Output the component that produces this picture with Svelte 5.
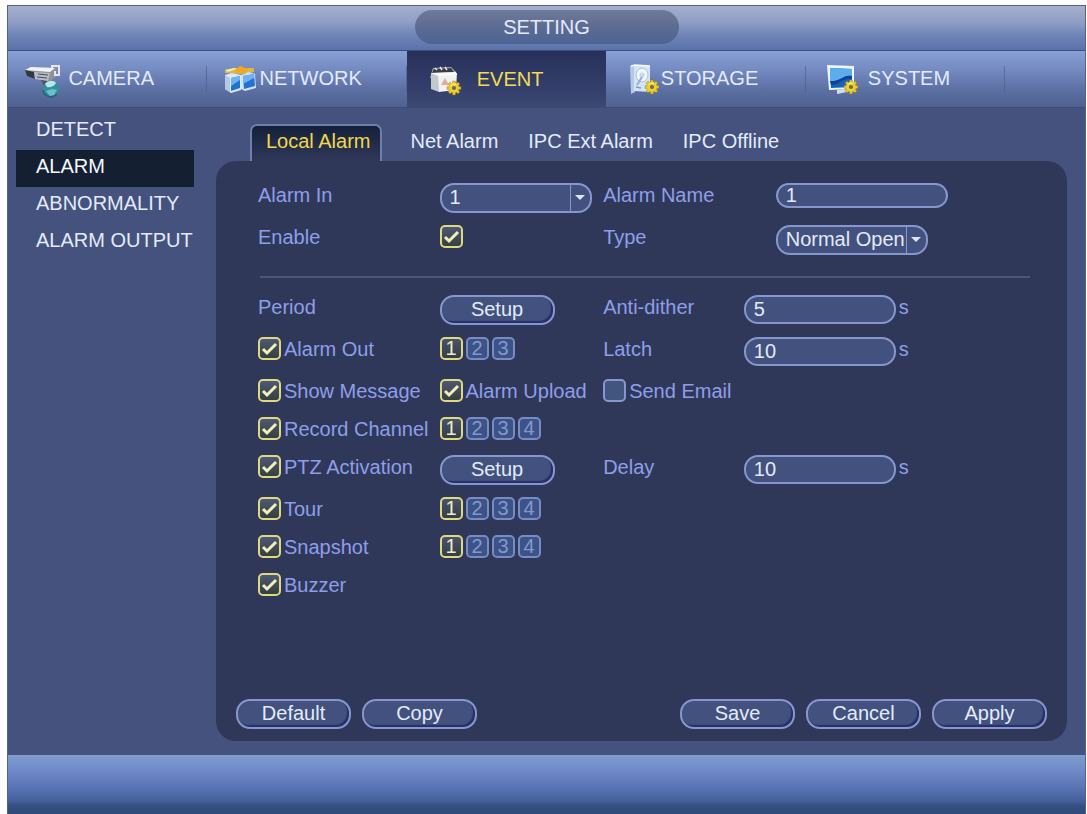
<script>
  const sections = ['CAMERA', 'NETWORK', 'EVENT', 'STORAGE', 'SYSTEM'];
  const menu = ['DETECT', 'ALARM', 'ABNORMALITY', 'ALARM OUTPUT'];
  const tabs = ['Local Alarm', 'Net Alarm', 'IPC Ext Alarm', 'IPC Offline'];

  let section = $state('EVENT');
  let page = $state('ALARM');
  let tab = $state('Local Alarm');

  let alarmIn = $state('1');
  let alarmName = $state('1');
  let type = $state('Normal Open');
  let antiDither = $state('5');
  let latch = $state('10');
  let delay = $state('10');

  let on = $state({
    enable: true,
    out: true,
    message: true,
    upload: true,
    email: false,
    record: true,
    ptz: true,
    tour: true,
    snapshot: true,
    buzzer: true
  });

  let picked = $state({
    out: [true, false, false],
    record: [true, false, false, false],
    tour: [true, false, false, false],
    snapshot: [true, false, false, false]
  });
</script>

{#snippet tick(key, id)}
  <span class="tick">
    <input type="checkbox" {id} bind:checked={on[key]} />
    <svg viewBox="0 0 23 23" aria-hidden="true"><path d="M5 12 9 16 18 7" /></svg>
  </span>
{/snippet}

{#snippet check(key, text)}
  <label class="check">
    {@render tick(key)}
    <span>{text}</span>
  </label>
{/snippet}

{#snippet chips(key)}
  <div class="chips">
    {#each picked[key] as chosen, i}
      <button
        type="button"
        class="chip"
        class:chosen
        aria-pressed={chosen}
        onclick={() => (picked[key][i] = !chosen)}>{i + 1}</button>
    {/each}
  </div>
{/snippet}

{#snippet arrow()}
  <svg viewBox="0 0 20 26" aria-hidden="true"><path d="M.5 0v26" /><path class="arrow" d="M5 10h10l-5 5z" /></svg>
{/snippet}

{#snippet gear(x, y)}
  <g transform="translate({x} {y})">
    <g fill="#e3c322" stroke="#8a7420" stroke-width=".4">
      {#each [0, 45, 90, 135] as a}
        <rect x="-1.5" y="-7" width="3" height="14" rx=".6" transform="rotate({a})" />
      {/each}
    </g>
    <circle r="4.9" fill="#ecd02e" />
    <circle r="2.1" fill="#6c6a58" />
    <path d="M-3.6-2A4.2 4.2 0 0 1 1.8-3.7" fill="none" stroke="#fff59a" />
  </g>
{/snippet}

{#snippet icon(name)}
  <svg class="icon" viewBox="0 0 46 40" aria-hidden="true">
    {#if name === 'CAMERA'}
      <path d="M0 7 6 4l26 1-1 9-8 5L2 13z" fill="#8d929d" />
      <path d="M0 7 6 4l24 1-5 4z" fill="#f1f3f6" />
      <path d="m0 7 9 2 1 7-8-3z" fill="#343845" />
      <path d="m9 9 16 1-2 8-13-2z" fill="#b7bbc4" />
      <path d="m13 11 10 1M12 14l10 1" stroke="#4b505e" />
      <path d="M27 5V3h7v9h-4V8" fill="none" stroke="#e4e7ee" stroke-width="2" />
      <path d="m16 17 6 1 2 5h-5z" fill="#4f5564" />
      <circle cx="26" cy="26" r="8" fill="#368d9c" />
      <path d="M20 21c3-4 9-4 11-1-2 4-7 5-9 4z" fill="#b5e6e8" />
      <path d="m21 28 6-2 5 1-3 5-4 1z" fill="#6cc0c9" />
      <path d="M18 27a8 8 0 0 0 14 4" fill="none" stroke="#1f6373" stroke-width="1.5" />
    {:else if name === 'NETWORK'}
      <path d="m1 7 9-2h20v4l-13 2L1 10z" fill="#dcb840" />
      <path d="m1 7 9-2 3 1-9 3z" fill="#f2e7b0" />
      <path d="m16 3 8 3-1 3-6 1-7-2z" fill="#f3a71c" />
      <path d="M1 12 8 10l9 2v15l-10 3-6-4z" fill="#dce8f7" />
      <path d="m17 12 8-3 6 2 1 14-11 3-4-2z" fill="#d1e1f4" />
      <path d="m1 12 5 3v14l-5-3z" fill="#b2c9e6" />
      <path d="m7 15 9-2v12l-9 3zM19 13l11-2 1 12-11 3z" fill="#2273d0" />
      <path d="m7 15 9-2v4l-9 6zM19 13l11-2v4l-11 6z" fill="#6fb2ef" />
    {:else if name === 'EVENT'}
      <path d="m9 4 18-1 5 5v8L6 14z" fill="#a9abb0" />
      <path d="m10 5 17-1 3 4-22 1z" fill="#3a3c45" />
      <path d="m11 4 2 2M16 3l2 3M21 3l2 3" stroke="#e4e5e8" stroke-width="1.5" />
      <path d="m7 9 8 1v18l-8-3z" fill="#c3c7d0" />
      <path d="m14 10 19-1-1 17-17 2z" fill="#f0f1f4" />
      <path d="m7 9 25-1 1 3-19 1z" fill="#fafafa" />
      <path d="m17 21 4-7 4 7z" fill="#ddad98" />
      {@render gear(30, 24)}
    {:else if name === 'STORAGE'}
      <path d="m7 3 5-1v27l-4 2z" fill="#b4c9e5" />
      <path d="m11 2 16 1v26l-16-1z" fill="#d5e4f5" />
      <path d="M8 3 12 2l15 1" fill="none" stroke="#f5f9fd" stroke-width="1.5" />
      <ellipse cx="19" cy="12" rx="6" ry="7" fill="#eef5fb" stroke="#a9c1db" />
      <circle cx="19" cy="12" r="2.5" fill="#c6d9ec" />
      <path d="m19 14-5 8" stroke="#94afcf" stroke-width="2" />
      <path d="m13 24 5 1" stroke="#809bbd" stroke-width="1.5" />
      {@render gear(29, 24)}
    {:else}
      <path d="m4 2 27 1v23l-25 1z" fill="#edf4fa" />
      <path d="m7 5 22 1v18L8 25z" fill="#1764b6" />
      <path d="m7 5 22 1v7c-8-2-12 6-22 5z" fill="#5badeb" />
      <path d="M7 18c10 1 14-7 22-5v3C20 14 17 22 8 22z" fill="#0c429a" />
      <path d="m14 27 8-1 2 3-10 2z" fill="#d2dde9" />
      {@render gear(28, 24)}
    {/if}
  </svg>
{/snippet}

<div class="window">
  <header class="title"><h1>SETTING</h1></header>

  <nav class="sections" aria-label="Sections">
    {#each sections as name}
      <button type="button" class="section" class:active={section === name} onclick={() => (section = name)}>
        {@render icon(name)}
        <span>{name}</span>
      </button>
    {/each}
  </nav>

  <div class="body">
    <nav class="menu" aria-label="Event">
      {#each menu as name}
        <button type="button" class:active={page === name} onclick={() => (page = name)}>{name}</button>
      {/each}
    </nav>

    <main>
      <div class="tabs" role="tablist">
        {#each tabs as name}
          <button type="button" role="tab" aria-selected={tab === name} class:active={tab === name} onclick={() => (tab = name)}>{name}</button>
        {/each}
      </div>

      <form class="panel" onsubmit={(e) => e.preventDefault()}>
        <div class="fields upper">
          <div class="row tall">
            <label for="alarm-in">Alarm In</label>
            <div class="select">
              <select id="alarm-in" bind:value={alarmIn}>
                <option>1</option><option>2</option><option>3</option><option>4</option>
              </select>
              {@render arrow()}
            </div>
            <label for="alarm-name">Alarm Name</label>
            <input id="alarm-name" class="text name" type="text" bind:value={alarmName} />
          </div>
          <div class="row tall">
            <label for="enable">Enable</label>
            {@render tick('enable', 'enable')}
            <label for="type">Type</label>
            <div class="select">
              <select id="type" bind:value={type}>
                <option>Normal Open</option><option>Normal Close</option>
              </select>
              {@render arrow()}
            </div>
          </div>
        </div>

        <hr />

        <div class="fields">
          <div class="row tall">
            <span>Period</span>
            <button type="button" class="pill">Setup</button>
            <label for="dither">Anti-dither</label>
            <div class="unit"><input id="dither" class="text" type="text" bind:value={antiDither} /><span>s</span></div>
          </div>
          <div class="row tall">
            {@render check('out', 'Alarm Out')}
            {@render chips('out')}
            <label for="latch">Latch</label>
            <div class="unit"><input id="latch" class="text" type="text" bind:value={latch} /><span>s</span></div>
          </div>
          <div class="row">
            {@render check('message', 'Show Message')}
            {@render check('upload', 'Alarm Upload')}
            {@render check('email', 'Send Email')}
          </div>
          <div class="row">
            {@render check('record', 'Record Channel')}
            {@render chips('record')}
          </div>
          <div class="row tall">
            {@render check('ptz', 'PTZ Activation')}
            <button type="button" class="pill">Setup</button>
            <label for="delay">Delay</label>
            <div class="unit"><input id="delay" class="text" type="text" bind:value={delay} /><span>s</span></div>
          </div>
          <div class="row">
            {@render check('tour', 'Tour')}
            {@render chips('tour')}
          </div>
          <div class="row">
            {@render check('snapshot', 'Snapshot')}
            {@render chips('snapshot')}
          </div>
          <div class="row">
            {@render check('buzzer', 'Buzzer')}
          </div>
        </div>

        <div class="actions">
          <button type="button" class="pill">Default</button>
          <button type="button" class="pill">Copy</button>
          <span class="spacer"></span>
          <button type="submit" class="pill">Save</button>
          <button type="button" class="pill">Cancel</button>
          <button type="button" class="pill">Apply</button>
        </div>
      </form>
    </main>
  </div>

  <footer></footer>
</div>

<style>
  :global(body) {
    background: #fdfdfe;
  }

  .window,
  .window * {
    box-sizing: border-box;
  }

  .window {
    display: flex;
    flex-direction: column;
    min-height: calc(100vh - 5px);
    margin: 5px 1px 0 7px;
    border: 1px solid #51618c;
    border-bottom: 0;
    background: #44527d;
    color: #e3eafb;
    font: 20px/24px "Liberation Sans", Arial, sans-serif;
  }

  button,
  input,
  select {
    margin: 0;
    padding: 0;
    border: 0;
    background: none;
    color: inherit;
    font: inherit;
  }

  .title {
    display: flex;
    justify-content: center;
    align-items: center;
    height: 44px;
    padding-bottom: 3px;
    background: linear-gradient(#a4afcc, #929fc5 35%, #7085b8 65%, #5b72aa);
  }

  h1 {
    width: 264px;
    margin: 0;
    border-radius: 17px;
    background: linear-gradient(#707a9a, #5c6b92 50%, #4c6494);
    font-size: 20px;
    font-weight: 400;
    line-height: 34px;
    text-align: center;
  }

  .sections {
    display: grid;
    grid-template-columns: repeat(5, minmax(0, 200fr)) 80fr;
    height: 58px;
    border-top: 1px solid #3e4e80;
    border-bottom: 1px solid #3c4b77;
    background: linear-gradient(#87a0d5, #7389bf 35%, #5c70a3 68%, #4e618f);
  }

  .section {
    display: grid;
    align-items: center;
    background: linear-gradient(#5a6ea2, #50638f) right / 1px 26px no-repeat;
  }

  .section > * {
    grid-area: 1 / 1;
  }

  .section span {
    padding: 0 0 2px 7px;
  }

  .section.active {
    margin-bottom: -1px;
    background: linear-gradient(#28305a, #303b67 50%, #3c4973);
    color: #f2dc51;
  }

  .icon {
    width: 46px;
    height: 40px;
    margin: 8px 0 0 17px;
  }

  .body {
    display: flex;
    flex: 1;
    padding-right: 18px;
  }

  .menu {
    display: flex;
    flex-direction: column;
    flex: none;
    width: 208px;
    padding: 5px 22px 0 8px;
  }

  .menu button {
    height: 37px;
    padding: 0 0 5px 20px;
    text-align: left;
    white-space: nowrap;
  }

  .menu button.active {
    background: #142032;
    color: #f4f8ff;
  }

  main {
    display: flex;
    flex: 1;
    flex-direction: column;
    min-width: 0;
    padding: 16px 0 14px;
  }

  .tabs {
    display: flex;
    height: 37px;
    padding-left: 34px;
  }

  .tabs button {
    padding: 0 15px 3px;
    white-space: nowrap;
  }

  .tabs .active {
    margin-right: 14px;
    padding: 0 9px 5px 14px;
    border: 2px solid #6c7fad;
    border-bottom: 0;
    border-radius: 7px 7px 0 0;
    background: linear-gradient(#14203a, #303859);
    color: #f0d848;
  }

  .panel {
    display: flex;
    flex: 1;
    flex-direction: column;
    padding: 22px 20px 12px;
    border-radius: 20px;
    background: #303859;
  }

  .fields {
    display: grid;
    gap: 12px;
    padding-left: 22px;
    color: #8e9eea;
  }

  .row {
    display: grid;
    grid-template-columns: 182fr 164fr 141fr 304fr;
    align-items: start;
    min-height: 26px;
  }

  .upper .row {
    grid-template-columns: 182fr 164fr 173fr 272fr;
  }

  .tall {
    min-height: 30px;
  }

  hr {
    width: calc(100% - 41px);
    height: 2px;
    margin: 21px 0 17px 24px;
    border: 0;
    background: #4b5578;
  }

  .check {
    display: flex;
    gap: 3px;
    white-space: nowrap;
  }

  .tick {
    display: grid;
    width: 23px;
    height: 23px;
  }

  .tick > * {
    grid-area: 1 / 1;
    width: 23px;
    height: 23px;
  }

  .tick input {
    appearance: none;
    border: 2px solid #8797cc;
    border-radius: 5px;
    background: #41557f;
  }

  .tick input:checked {
    border-color: #dfd87e;
    background: linear-gradient(#4d5877, #34403f);
  }

  .tick svg {
    visibility: hidden;
    fill: none;
    stroke: #f3efba;
    stroke-width: 3;
    pointer-events: none;
  }

  .tick input:checked + svg {
    visibility: visible;
  }

  .chips {
    display: flex;
    gap: 3px;
  }

  .chip {
    width: 23px;
    height: 23px;
    border: 2px solid #758cc5;
    border-radius: 5px;
    background: #3d5286;
    color: #8399ce;
    line-height: 19px;
  }

  .chip.chosen {
    border-color: #dfd87e;
    background: linear-gradient(#48536e, #333f45);
    color: #efecc4;
  }

  .text,
  .select,
  .pill {
    border: 2px solid #8796cd;
    border-radius: 14px;
    background: #43517e;
    color: #e3eafb;
  }

  .text {
    width: 152px;
    height: 29px;
    padding: 0 0 1px 8px;
  }

  .name {
    width: 172px;
    height: 25px;
  }

  .select {
    display: grid;
    grid-template-columns: 1fr 20px;
    width: 152px;
    height: 30px;
    overflow: hidden;
  }

  .select select {
    grid-area: 1 / 1 / 2 / 3;
    appearance: none;
    padding: 0 20px 2px 8px;
  }

  .select svg {
    grid-area: 1 / 2;
    width: 20px;
    height: 26px;
    stroke: #8796cd;
    pointer-events: none;
  }

  .select .arrow {
    fill: #dce5fb;
    stroke: none;
  }

  .unit {
    display: flex;
    gap: 3px;
  }

  .pill {
    width: 115px;
    height: 30px;
    padding-bottom: 2px;
    box-shadow: inset -2px -2px 1px #26306a;
    line-height: 24px;
  }

  .actions {
    display: flex;
    gap: 11px;
    margin-top: auto;
  }

  .spacer {
    flex: 1;
  }

  footer {
    height: 59px;
    background: linear-gradient(#7e9ccd, #718bca 25%, #5570b0 60%, #425d97 80%, #34507e 86%, #304a7c);
  }
</style>
